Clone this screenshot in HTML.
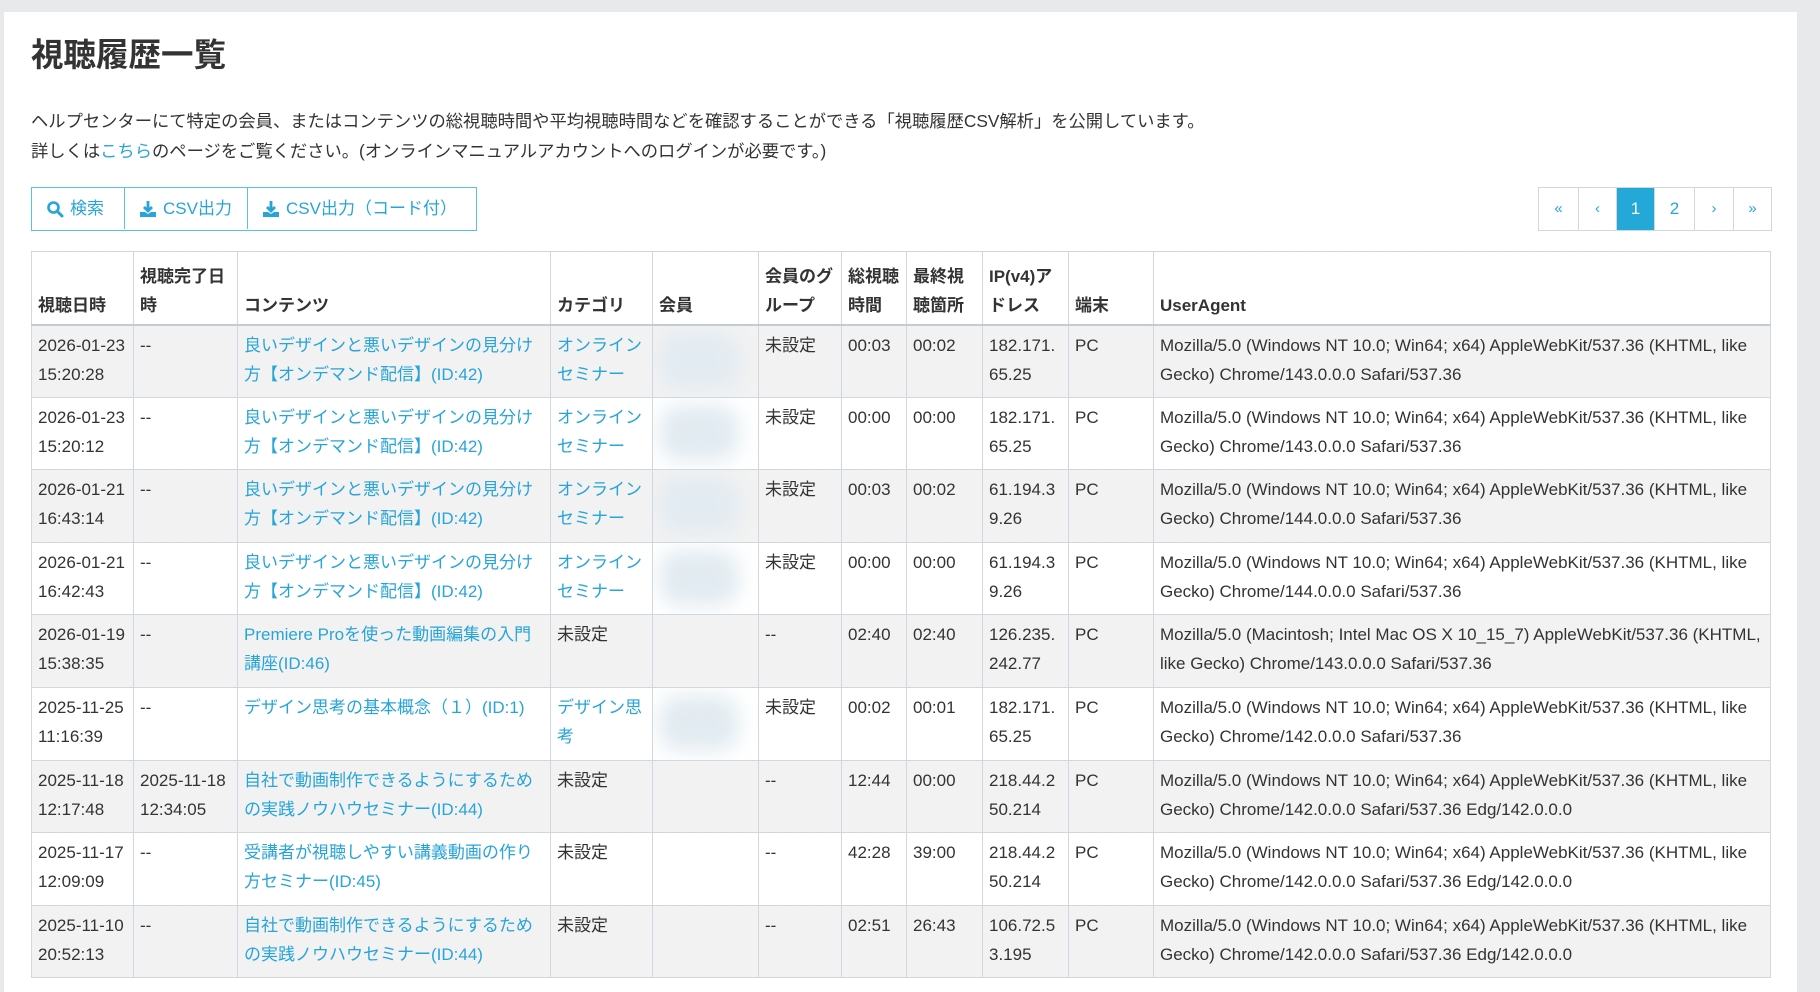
<!DOCTYPE html>
<html><head><meta charset="utf-8"><style>
*{box-sizing:border-box;margin:0;padding:0}
body{width:1820px;height:977px;overflow:hidden;background:#e8e9eb;font-family:"Liberation Sans","Noto Sans CJK JP",sans-serif;color:#333;position:relative}
.panel{position:absolute;left:4px;top:12px;width:1793px;height:980px;background:#fff}
h1{position:absolute;left:31px;top:35px;font-size:32.5px;font-weight:bold;color:#333;line-height:40px}
.p{position:absolute;left:31px;font-size:17.3px;line-height:22px;color:#333}
a{color:#27a4d9;text-decoration:none}
.btns{position:absolute;left:31px;top:187px;height:44px;display:flex;border:1.5px solid #5bc0e6}
.btns div{height:41px;line-height:41px;color:#27a4d9;font-size:17px;padding:0 14px;border-right:1.5px solid #5bc0e6;display:flex;align-items:center;gap:6px}
.btns div:last-child{border-right:none}
.pg{position:absolute;left:1538px;top:187px;height:44px;display:flex;border:1px solid #cfd8dc}
.pg div{height:42px;line-height:42px;text-align:center;color:#27a4d9;font-size:17px;border-left:1px solid #cfd8dc}
.pg div:first-child{border-left:none}
.pg .on{background:#23a8d8;color:#fff}
table{position:absolute;left:31px;top:251px;width:1739px;border-collapse:collapse;table-layout:fixed;font-size:17px;line-height:29px}
td,th{border:1px solid #cfd8dc;padding:5px 6px;vertical-align:top;text-align:left;overflow:hidden}
td:nth-child(9){word-break:break-all}
th{vertical-align:bottom;font-weight:bold;height:73px;border-bottom:2px solid #c3ccd2;color:#333;padding-bottom:4px}
tr.o td{background:#f2f2f2}
tr.r td{height:72.6px}
.blur{width:80px;height:56px;margin:2px 0;background:#e2ebf1;filter:blur(10px);border-radius:20px}
</style></head><body>
<div class="panel"></div>
<h1>視聴履歴一覧</h1>
<div class="p" style="top:110px">ヘルプセンターにて特定の会員、またはコンテンツの総視聴時間や平均視聴時間などを確認することができる「視聴履歴CSV解析」を公開しています。</div>
<div class="p" style="top:140px">詳しくは<a>こちら</a>のページをご覧ください。(オンラインマニュアルアカウントへのログインが必要です。)</div>
<div class="btns">
<div style="width:93px"><svg width="18" height="18" viewBox="0 0 18 18"><circle cx="7.5" cy="7.5" r="5" fill="none" stroke="#27a4d9" stroke-width="2.6"/><path d="M11 11l5 5" stroke="#27a4d9" stroke-width="3" stroke-linecap="round"/></svg>検索</div>
<div style="width:123px"><svg width="18" height="18" viewBox="0 0 18 18"><path d="M9 1v9M5 7l4 4 4-4" stroke="#27a4d9" stroke-width="2.8" fill="none"/><path d="M1 12h5l3 2 3-2h5v5H1z" fill="#27a4d9"/></svg>CSV出力</div>
<div style="width:228px"><svg width="18" height="18" viewBox="0 0 18 18"><path d="M9 1v9M5 7l4 4 4-4" stroke="#27a4d9" stroke-width="2.8" fill="none"/><path d="M1 12h5l3 2 3-2h5v5H1z" fill="#27a4d9"/></svg>CSV出力（コード付）</div>
</div>
<div class="pg"><div style="width:39px;font-size:15px">«</div><div style="width:38px;font-size:15px">‹</div><div class="on" style="width:38px">1</div><div style="width:40px">2</div><div style="width:39px;font-size:15px">›</div><div style="width:38px;font-size:15px">»</div></div>
<table>
<colgroup><col style="width:102px"><col style="width:104px"><col style="width:313px"><col style="width:102px"><col style="width:106px"><col style="width:83px"><col style="width:65px"><col style="width:76px"><col style="width:86px"><col style="width:85px"><col style="width:617px"></colgroup>
<tr><th>視聴日時</th><th>視聴完了日時</th><th>コンテンツ</th><th>カテゴリ</th><th>会員</th><th>会員のグループ</th><th>総視聴時間</th><th>最終視聴箇所</th><th>IP(v4)アドレス</th><th>端末</th><th>UserAgent</th></tr>
<tr class="r o"><td>2026-01-23 15:20:28</td><td>--</td><td><a>良いデザインと悪いデザインの見分け方【オンデマンド配信】(ID:42)</a></td><td><a>オンライン セミナー</a></td><td><div class="blur"></div></td><td>未設定</td><td>00:03</td><td>00:02</td><td>182.171.65.25</td><td>PC</td><td>Mozilla/5.0 (Windows NT 10.0; Win64; x64) AppleWebKit/537.36 (KHTML, like Gecko) Chrome/143.0.0.0 Safari/537.36</td></tr>
<tr class="r"><td>2026-01-23 15:20:12</td><td>--</td><td><a>良いデザインと悪いデザインの見分け方【オンデマンド配信】(ID:42)</a></td><td><a>オンライン セミナー</a></td><td><div class="blur"></div></td><td>未設定</td><td>00:00</td><td>00:00</td><td>182.171.65.25</td><td>PC</td><td>Mozilla/5.0 (Windows NT 10.0; Win64; x64) AppleWebKit/537.36 (KHTML, like Gecko) Chrome/143.0.0.0 Safari/537.36</td></tr>
<tr class="r o"><td>2026-01-21 16:43:14</td><td>--</td><td><a>良いデザインと悪いデザインの見分け方【オンデマンド配信】(ID:42)</a></td><td><a>オンライン セミナー</a></td><td><div class="blur"></div></td><td>未設定</td><td>00:03</td><td>00:02</td><td>61.194.39.26</td><td>PC</td><td>Mozilla/5.0 (Windows NT 10.0; Win64; x64) AppleWebKit/537.36 (KHTML, like Gecko) Chrome/144.0.0.0 Safari/537.36</td></tr>
<tr class="r"><td>2026-01-21 16:42:43</td><td>--</td><td><a>良いデザインと悪いデザインの見分け方【オンデマンド配信】(ID:42)</a></td><td><a>オンライン セミナー</a></td><td><div class="blur"></div></td><td>未設定</td><td>00:00</td><td>00:00</td><td>61.194.39.26</td><td>PC</td><td>Mozilla/5.0 (Windows NT 10.0; Win64; x64) AppleWebKit/537.36 (KHTML, like Gecko) Chrome/144.0.0.0 Safari/537.36</td></tr>
<tr class="r o"><td>2026-01-19 15:38:35</td><td>--</td><td><a>Premiere Proを使った動画編集の入門講座(ID:46)</a></td><td>未設定</td><td></td><td>--</td><td>02:40</td><td>02:40</td><td>126.235.242.77</td><td>PC</td><td>Mozilla/5.0 (Macintosh; Intel Mac OS X 10_15_7) AppleWebKit/537.36 (KHTML, like Gecko) Chrome/143.0.0.0 Safari/537.36</td></tr>
<tr class="r"><td>2025-11-25 11:16:39</td><td>--</td><td><a>デザイン思考の基本概念（１）(ID:1)</a></td><td><a>デザイン思考</a></td><td><div class="blur"></div></td><td>未設定</td><td>00:02</td><td>00:01</td><td>182.171.65.25</td><td>PC</td><td>Mozilla/5.0 (Windows NT 10.0; Win64; x64) AppleWebKit/537.36 (KHTML, like Gecko) Chrome/142.0.0.0 Safari/537.36</td></tr>
<tr class="r o"><td>2025-11-18 12:17:48</td><td>2025-11-18 12:34:05</td><td><a>自社で動画制作できるようにするための実践ノウハウセミナー(ID:44)</a></td><td>未設定</td><td></td><td>--</td><td>12:44</td><td>00:00</td><td>218.44.250.214</td><td>PC</td><td>Mozilla/5.0 (Windows NT 10.0; Win64; x64) AppleWebKit/537.36 (KHTML, like Gecko) Chrome/142.0.0.0 Safari/537.36 Edg/142.0.0.0</td></tr>
<tr class="r"><td>2025-11-17 12:09:09</td><td>--</td><td><a>受講者が視聴しやすい講義動画の作り方セミナー(ID:45)</a></td><td>未設定</td><td></td><td>--</td><td>42:28</td><td>39:00</td><td>218.44.250.214</td><td>PC</td><td>Mozilla/5.0 (Windows NT 10.0; Win64; x64) AppleWebKit/537.36 (KHTML, like Gecko) Chrome/142.0.0.0 Safari/537.36 Edg/142.0.0.0</td></tr>
<tr class="r o"><td>2025-11-10 20:52:13</td><td>--</td><td><a>自社で動画制作できるようにするための実践ノウハウセミナー(ID:44)</a></td><td>未設定</td><td></td><td>--</td><td>02:51</td><td>26:43</td><td>106.72.53.195</td><td>PC</td><td>Mozilla/5.0 (Windows NT 10.0; Win64; x64) AppleWebKit/537.36 (KHTML, like Gecko) Chrome/142.0.0.0 Safari/537.36 Edg/142.0.0.0</td></tr>
</table>
</body></html>
